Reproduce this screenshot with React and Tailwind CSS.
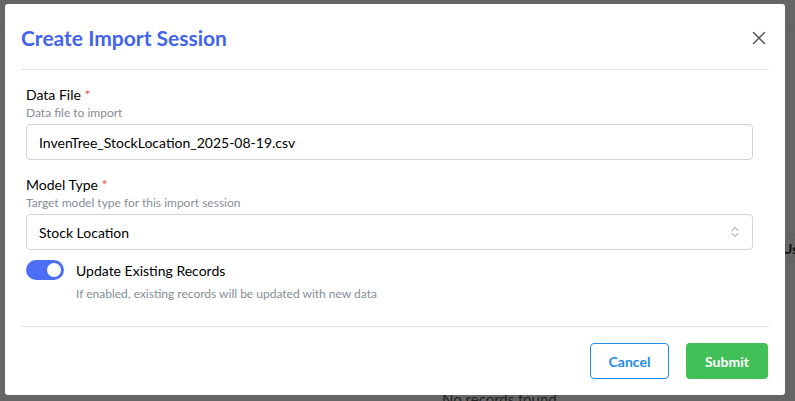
export default function App() {
  const font = { fontFamily: 'Lato, "Open Sans", sans-serif' };

  return (
    <div className="relative w-[795px] h-[401px] overflow-hidden bg-[#656565]" style={font}>
      {/* page behind the overlay */}
      <div className="absolute inset-0">
        <div className="h-[28px] border-b border-[#5c5c5c]" />
        <div className="absolute right-0 top-[234px] w-[12px] h-[28px] border-y border-[#5c5c5c] flex items-center">
          <span className="-ml-[1px] text-[14px] font-bold text-[#111]">Us</span>
        </div>
        <div className="absolute left-[442px] top-[388px] text-[15px] text-[#222]">No records found</div>
      </div>

      {/* modal */}
      <div className="absolute left-[5px] top-[4px] w-[780px] h-[391px] bg-white rounded-[3px] flex flex-col">
        <div className="flex items-center justify-between px-4 pt-[20px] pb-[17px]">
          <h2 className="text-[21px] leading-[28px] font-bold text-[#4263eb]">Create Import Session</h2>
          <button className="mr-[3px] text-[#495057]">
            <svg width="14" height="14" viewBox="0 0 14 14" fill="none" stroke="currentColor" strokeWidth="1.4" strokeLinecap="round">
              <path d="M1.5 1.5l11 11M12.5 1.5l-11 11" />
            </svg>
          </button>
        </div>
        <div className="mx-4 h-px bg-[#dee2e6]" />

        <div className="flex flex-col pl-[21px] pr-[32px] pt-[14px]">
          <label className="text-[14px] leading-[21px] text-[#000]">
            Data File <span className="text-[#fa5252]">*</span>
          </label>
          <p className="text-[12px] leading-[16px] text-[#868e96]">Data file to import</p>
          <div className="mt-[3px] h-[36px] border border-[#ced4da] rounded-[4px] flex items-center px-[12px] text-[14px] text-[#000]">
            InvenTree_StockLocation_2025-08-19.csv
          </div>

          <label className="mt-[14px] text-[14px] leading-[21px] text-[#000]">
            Model Type <span className="text-[#fa5252]">*</span>
          </label>
          <p className="text-[12px] leading-[16px] text-[#868e96]">Target model type for this import session</p>
          <div className="mt-[3px] h-[36px] border border-[#ced4da] rounded-[4px] flex items-center justify-between pl-[12px] pr-[12px] text-[14px] text-[#000]">
            <span>Stock Location</span>
            <svg width="10" height="12" viewBox="0 0 10 12" fill="none" stroke="#868e96" strokeWidth="1" strokeLinecap="round" strokeLinejoin="round">
              <path d="M2 4.5L5 1.5l3 3M2 7.5l3 3 3-3" />
            </svg>
          </div>

          <div className="mt-[10px] flex items-start gap-[12px]">
            <div className="w-[38px] h-[20px] rounded-full bg-[#4c6ef5] flex items-center justify-end pr-[3px]">
              <div className="w-[14px] h-[14px] rounded-full bg-white" />
            </div>
            <div className="flex flex-col">
              <span className="text-[14px] leading-[22px] text-[#000]">Update Existing Records</span>
              <span className="mt-[4px] text-[12px] leading-[16px] text-[#868e96]">If enabled, existing records will be updated with new data</span>
            </div>
          </div>
        </div>

        <div className="mx-4 mt-[24px] h-px bg-[#dee2e6]" />

        <div className="flex justify-end gap-[17px] px-[17px] pt-[16px]">
          <button className="w-[79px] h-[36px] rounded-[4px] border border-[#228be6] text-[14px] font-bold text-[#228be6]">
            Cancel
          </button>
          <button className="w-[82px] h-[36px] rounded-[4px] bg-[#40c057] text-[14px] font-bold text-white">
            Submit
          </button>
        </div>
      </div>
    </div>
  );
}
